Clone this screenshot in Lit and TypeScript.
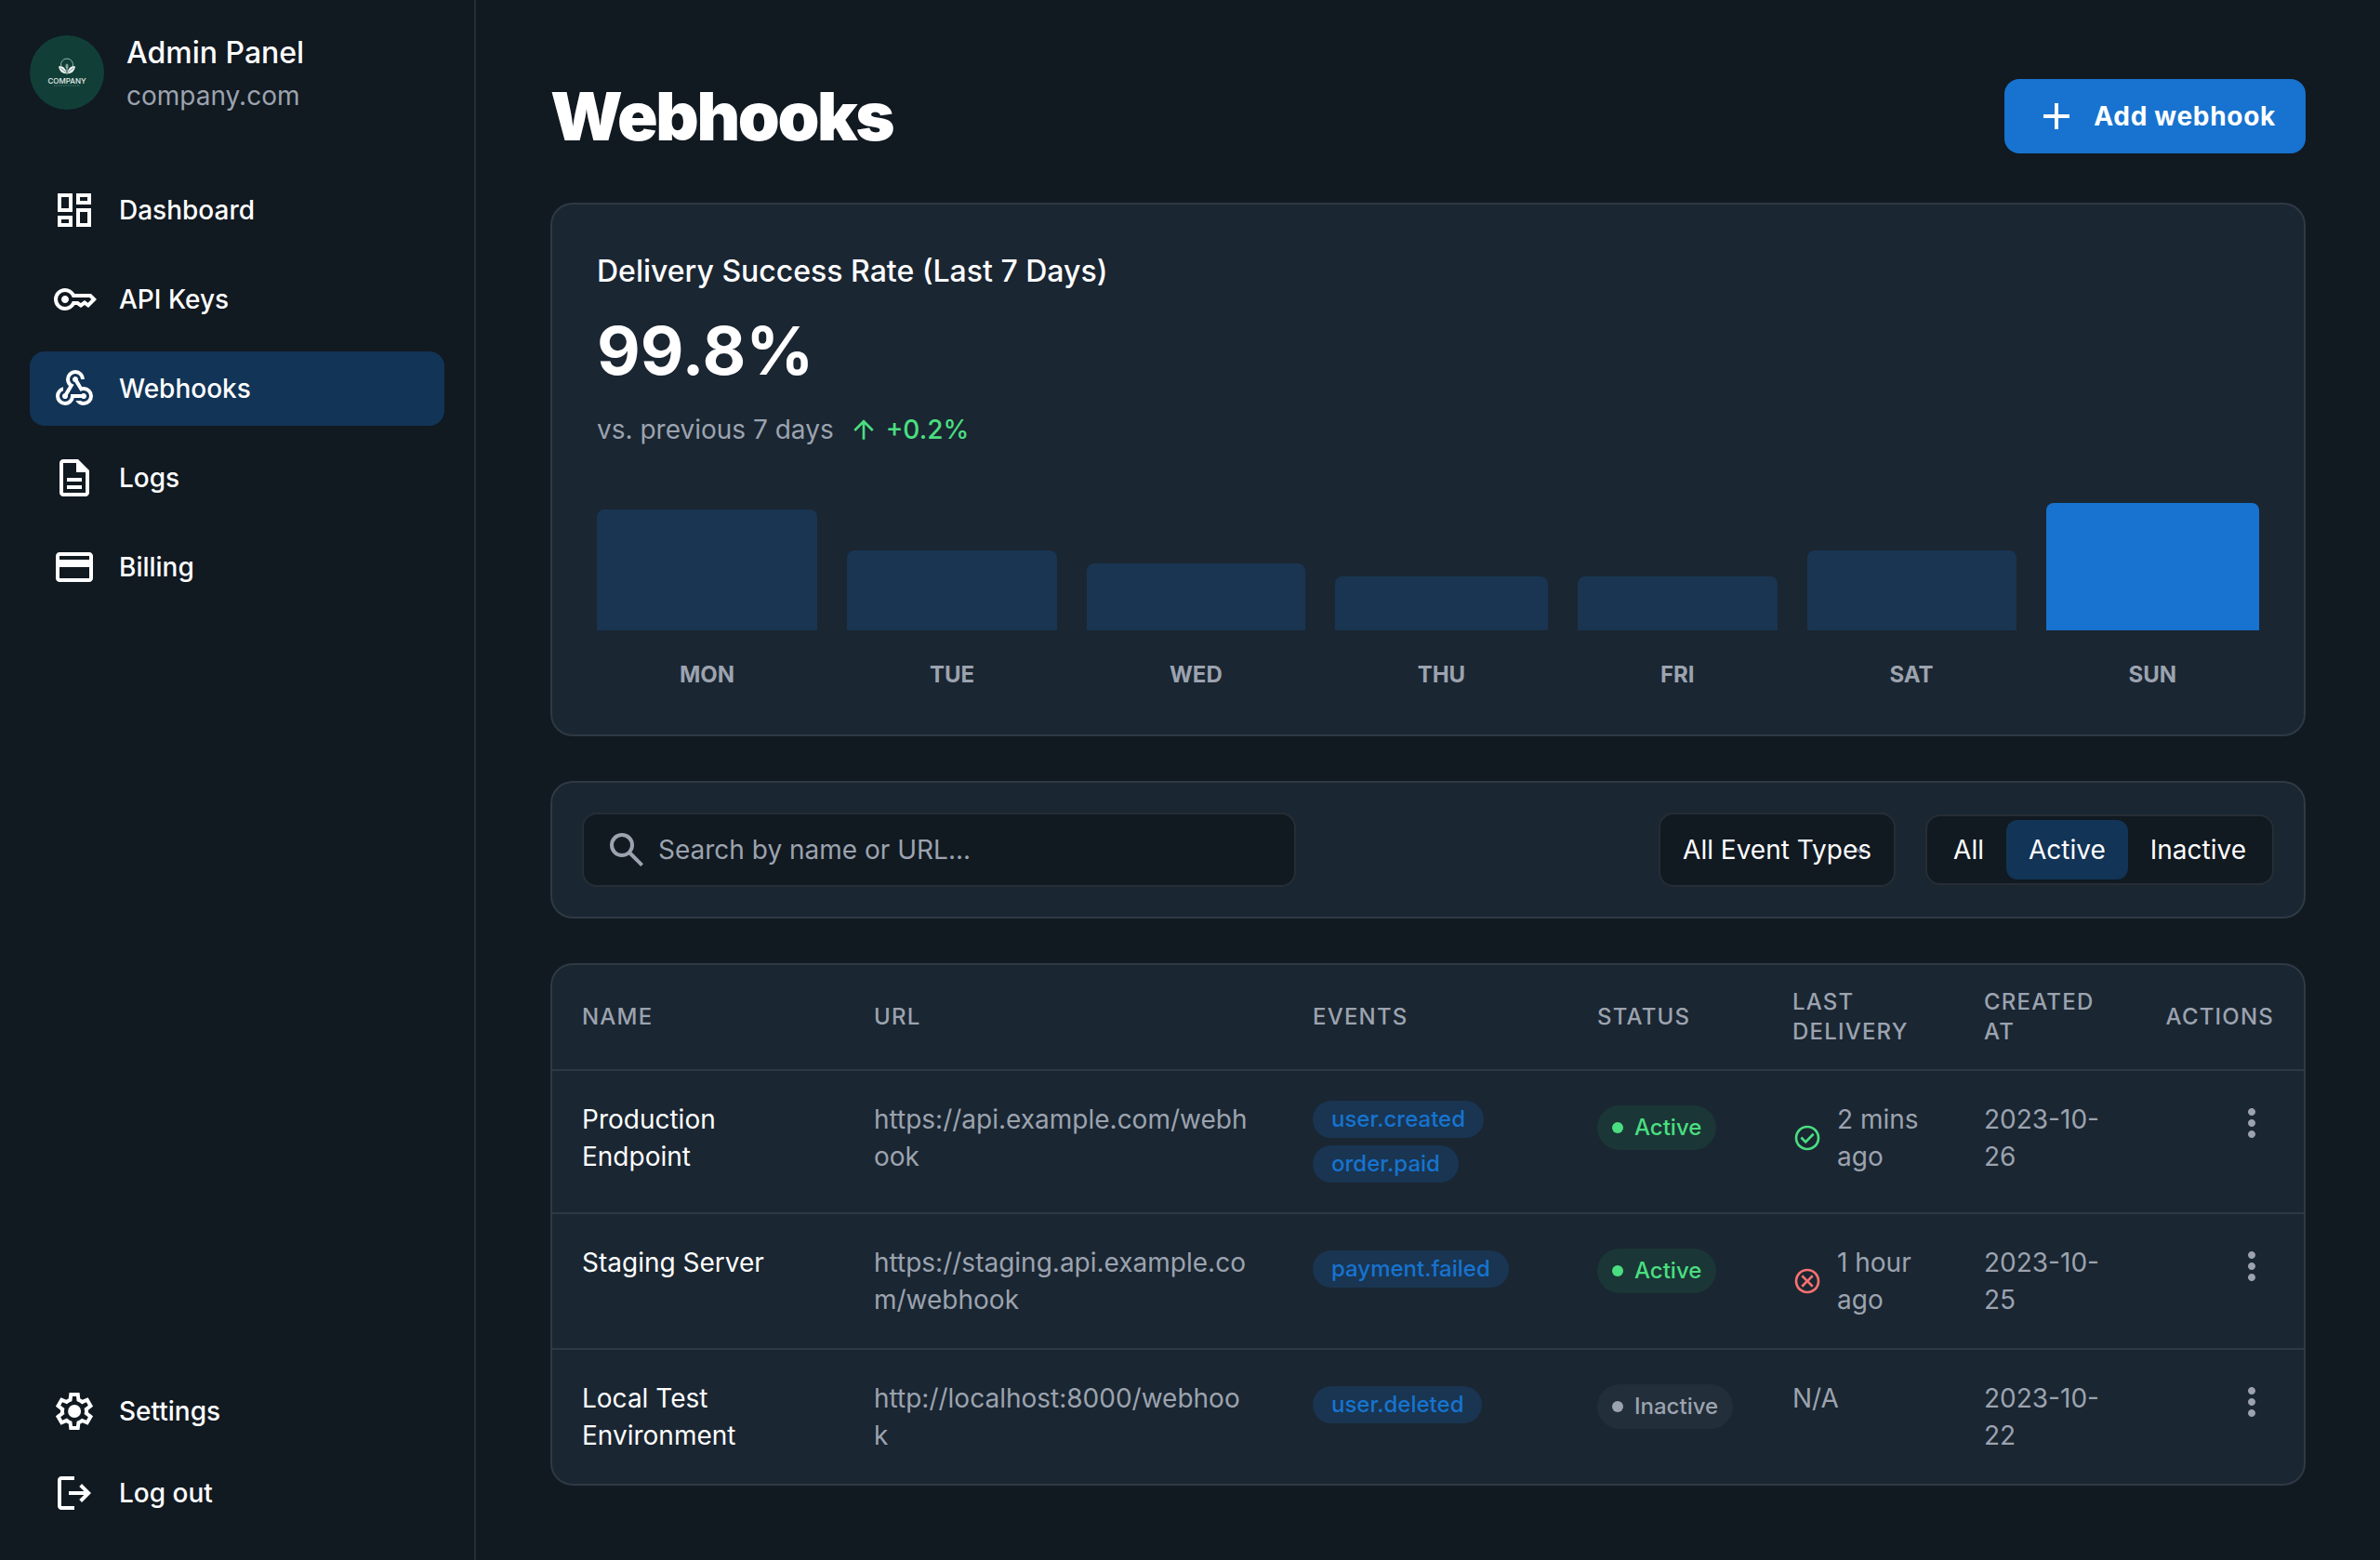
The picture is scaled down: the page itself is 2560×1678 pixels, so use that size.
import { LitElement, html, css, svg, nothing } from "lit";
import { customElement, property, state } from "lit/decorators.js";
import { classMap } from "lit/directives/class-map.js";
import { styleMap } from "lit/directives/style-map.js";

type Glyph = { box: string; d: string };

const SYMBOL = "0 -960 960 960";
const GRID = "0 0 24 24";

const GLYPHS: Record<string, Glyph> = {
  dashboard: {
    box: GRID,
    d: "M19 5v2h-4V5h4M9 5v6H5V5h4m10 8v6h-4v-6h4M9 17v2H5v-2h4M21 3h-8v6h8V3zM11 3H3v10h8V3zm10 8h-8v10h8V11zm-10 4H3v6h8v-6z",
  },
  key: {
    box: SYMBOL,
    d: "M280-400q-33 0-56.5-23.5T200-480q0-33 23.5-56.5T280-560q33 0 56.5 23.5T360-480q0 33-23.5 56.5T280-400Zm0 160q-100 0-170-70T40-480q0-100 70-170t170-70q67 0 121.5 33t86.5 87h352l120 120-180 180-80-60-80 60-85-60h-47q-32 54-86.5 87T280-240Zm0-80q56 0 98.5-34t56.5-86h125l58 41 82-61 71 55 75-75-40-40H435q-14-52-56.5-86T280-640q-66 0-113 47t-47 113q0 66 47 113t113 47Z",
  },
  webhook: {
    box: SYMBOL,
    d: "M280-120q-83 0-141.5-58.5T80-320q0-73 45.5-127.5T240-516v83q-35 12-57.5 43T160-320q0 50 35 85t85 35q50 0 85-35t35-85v-40h235q8-9 19.5-14.5T680-380q25 0 42.5 17.5T740-320q0 25-17.5 42.5T680-260q-14 0-25.5-5.5T635-280H476q-14 69-68.5 114.5T280-120Zm400 0q-56 0-101.5-27.5T507-220h111q14 10 29.5 15t32.5 5q50 0 85-35t35-85q0-50-35-85t-85-35q-20 0-37 5.5T611-418L489-621q-21-4-35-20t-14-39q0-25 17.5-42.5T500-740q25 0 42.5 17.5T560-680v8.5q0 3.5-2 8.5l87 146q8-2 17-2.5t18-.5q83 0 141.5 58.5T880-320q0 83-58.5 141.5T680-120ZM280-260q-25 0-42.5-17.5T220-320q0-22 14-38t34-21l94-156q-29-27-45.5-64.5T300-680q0-83 58.5-141.5T500-880q83 0 141.5 58.5T700-680h-80q0-50-35-85t-85-35q-50 0-85 35t-35 85q0 43 26 75.5t66 41.5L337-338q2 5 2.5 9t.5 9q0 25-17.5 42.5T280-260Z",
  },
  description: {
    box: GRID,
    d: "M8 16h8v2H8zm0-4h8v2H8zm6-10H6c-1.1 0-2 .9-2 2v16c0 1.1.89 2 1.99 2H18c1.1 0 2-.9 2-2V8l-6-6zm4 18H6V4h7v5h5v11z",
  },
  card: {
    box: GRID,
    d: "M20 4H4c-1.11 0-1.99.89-1.99 2L2 18c0 1.11.89 2 2 2h16c1.11 0 2-.89 2-2V6c0-1.11-.89-2-2-2zm0 14H4v-6h16v6zm0-10H4V6h16v2z",
  },
  settings: {
    box: SYMBOL,
    d: "m370-80-16-128q-13-5-24.5-12T307-235l-119 50L78-375l103-78q-1-7-1-13.5v-27q0-6.5 1-13.5L78-585l110-190 119 50q11-8 23-15t24-12l16-128h220l16 128q13 5 24.5 12t22.5 15l119-50 110 190-103 78q1 7 1 13.5v27q0 6.5-2 13.5l103 78-110 190-118-50q-11 8-23 15t-24 12L590-80H370Zm70-80h79l14-106q31-8 57.5-23.5T639-327l99 41 39-68-86-65q5-14 7-29.5t2-31.5q0-16-2-31.5t-7-29.5l86-65-39-68-99 42q-22-23-48.5-38.5T533-694l-13-106h-79l-14 106q-31 8-57.5 23.5T321-633l-99-41-39 68 86 64q-5 15-7 30t-2 32q0 16 2 31t7 30l-86 65 39 68 99-42q22 23 48.5 38.5T427-266l13 106Zm42-180q58 0 99-41t41-99q0-58-41-99t-99-41q-59 0-99.5 41T342-480q0 58 40.5 99t99.5 41Z",
  },
  logout: {
    box: SYMBOL,
    d: "M200-120q-33 0-56.5-23.5T120-200v-560q0-33 23.5-56.5T200-840h280v80H200v560h280v80H200Zm440-160-55-58 102-102H360v-80h327L585-622l55-58 200 200-200 200Z",
  },
  add: { box: GRID, d: "M19 13h-6v6h-2v-6H5v-2h6V5h2v6h6v2z" },
  up: {
    box: SYMBOL,
    d: "M440-160v-487L216-423l-56-57 320-320 320 320-56 57-224-224v487h-80Z",
  },
  search: {
    box: SYMBOL,
    d: "M784-120 532-372q-30 24-69 38t-83 14q-109 0-184.5-75.5T120-580q0-109 75.5-184.5T380-840q109 0 184.5 75.5T640-580q0 44-14 83t-38 69l252 252-56 56ZM380-400q75 0 127.5-52.5T560-580q0-75-52.5-127.5T380-760q-75 0-127.5 52.5T200-580q0 75 52.5 127.5T380-400Z",
  },
  success: {
    box: SYMBOL,
    d: "m424-296 282-282-56-56-226 226-114-114-56 56 170 170Zm56 216q-83 0-156-31.5T197-197q-54-54-85.5-127T80-480q0-83 31.5-156T197-763q54-54 127-85.5T480-880q83 0 156 31.5T763-763q54 54 85.5 127T880-480q0 83-31.5 156T763-197q-54 54-127 85.5T480-80Zm0-80q134 0 227-93t93-227q0-134-93-227t-227-93q-134 0-227 93t-93 227q0 134 93 227t227 93Z",
  },
  failure: {
    box: SYMBOL,
    d: "m336-280 144-144 144 144 56-56-144-144 144-144-56-56-144 144-144-144-56 56 144 144-144 144 56 56ZM480-80q-83 0-156-31.5T197-197q-54-54-85.5-127T80-480q0-83 31.5-156T197-763q54-54 127-85.5T480-880q83 0 156 31.5T763-763q54 54 85.5 127T880-480q0 83-31.5 156T763-197q-54 54-127 85.5T480-80Zm0-80q134 0 227-93t93-227q0-134-93-227t-227-93q-134 0-227 93t-93 227q0 134 93 227t227 93Z",
  },
  more: {
    box: SYMBOL,
    d: "M480-160q-33 0-56.5-23.5T400-240q0-33 23.5-56.5T480-320q33 0 56.5 23.5T560-240q0 33-23.5 56.5T480-160Zm0-240q-33 0-56.5-23.5T400-480q0-33 23.5-56.5T480-560q33 0 56.5 23.5T560-480q0 33-23.5 56.5T480-400Zm0-240q-33 0-56.5-23.5T400-720q0-33 23.5-56.5T480-800q33 0 56.5 23.5T560-720q0 33-23.5 56.5T480-640Z",
  },
};

@customElement("ui-icon")
class UiIcon extends LitElement {
  @property() name = "";

  static styles = css`
    :host {
      display: block;
      flex: none;
      width: 48px;
      height: 48px;
    }
    .glyph {
      display: block;
      width: 100%;
      height: 100%;
      fill: currentColor;
    }
  `;

  render() {
    const glyph = GLYPHS[this.name];
    if (!glyph) return nothing;
    return html`<svg class="glyph" viewBox=${glyph.box} aria-hidden="true">
      ${svg`<path d=${glyph.d}></path>`}
    </svg>`;
  }
}

@customElement("side-bar")
class SideBar extends LitElement {
  static styles = css`
    :host {
      display: flex;
      flex-direction: column;
      justify-content: space-between;
      box-sizing: border-box;
      flex: none;
      width: 512px;
      padding: 32px;
      border-right: 2px solid var(--line);
      background: var(--page);
    }
    .brand {
      display: flex;
      align-items: center;
      gap: 24px;
      margin-bottom: 62px;
    }
    .logo {
      display: block;
      width: 80px;
      height: 80px;
      border-radius: 50%;
      background: #113f38;
    }
    .word {
      font: 500 8px Inter, "Liberation Sans", sans-serif;
      fill: #e6efec;
    }
    .title {
      margin: 0;
      font-size: 32px;
      font-weight: 500;
      line-height: 50px;
    }
    .site {
      margin: 0;
      font-size: 28px;
      line-height: 42px;
      color: var(--muted);
    }
    .nav {
      display: flex;
      flex-direction: column;
      gap: 16px;
    }
    .foot {
      gap: 8px;
    }
    .item {
      display: flex;
      align-items: center;
      gap: 24px;
      padding: 16px 24px;
      border-radius: 16px;
      font-size: 28px;
      font-weight: 500;
      line-height: 42px;
      color: inherit;
      text-decoration: none;
    }
    .current {
      background: var(--primary-30);
    }
  `;

  private item(icon: string, label: string, current = false) {
    return html`<a
      class=${classMap({ item: true, current })}
      href="#"
      aria-current=${current ? "page" : nothing}
    >
      <ui-icon name=${icon}></ui-icon>${label}
    </a>`;
  }

  render() {
    return html`
      <div>
        <div class="brand">
          <svg class="logo" viewBox="0 0 80 80" role="img" aria-label="Company logo">
            <path
              d="M33.8 33.5a6.5 6.5 0 1 1 12.4 0"
              fill="none"
              stroke="#b9cfc9"
              stroke-width="0.8"
            />
            <path d="M31 33.5c4-1 8 1.500 8.500 7.500-4 .5-7.500-2-8.500-7.500z" fill="#f2f7f5" />
            <path d="M49 33.5c-4-1-8 1.500-8.500 7.500 4 .5 7.500-2 8.500-7.500z" fill="#f2f7f5" />
            <path
              d="M33 35l6 5M47 35l-6 5"
              fill="none"
              stroke="#113f38"
              stroke-width="0.6"
            />
            <ellipse cx="40" cy="33" rx="1.6" ry="2.6" fill="#7d9f96" />
            <path d="M40 34v8" stroke="#b9cfc9" stroke-width="1" />
            <text class="word" x="40" y="52" text-anchor="middle">COMPANY</text>
            <path d="M26 54h28" stroke="#5f857c" stroke-width="0.8" stroke-dasharray="1.5 1" />
          </svg>
          <div>
            <p class="title">Admin Panel</p>
            <p class="site">company.com</p>
          </div>
        </div>
        <nav class="nav" aria-label="Main">
          ${this.item("dashboard", "Dashboard")} ${this.item("key", "API Keys")}
          ${this.item("webhook", "Webhooks", true)} ${this.item("description", "Logs")}
          ${this.item("card", "Billing")}
        </nav>
      </div>
      <nav class="nav foot" aria-label="Account">
        ${this.item("settings", "Settings")} ${this.item("logout", "Log out")}
      </nav>
    `;
  }
}

const DAYS = [
  { day: "Mon", level: 90 },
  { day: "Tue", level: 60 },
  { day: "Wed", level: 50 },
  { day: "Thu", level: 40 },
  { day: "Fri", level: 40 },
  { day: "Sat", level: 60 },
  { day: "Sun", level: 95 },
];

@customElement("success-chart")
class SuccessChart extends LitElement {
  static styles = css`
    :host {
      display: flex;
      flex-direction: column;
      gap: 16px;
      padding: 48px;
      border: 2px solid var(--line);
      border-radius: 24px;
      background: var(--card);
    }
    .label {
      margin: 0;
      font-size: 32px;
      font-weight: 500;
      line-height: 48px;
    }
    .figure {
      margin: 0;
      font-size: 72px;
      font-weight: 700;
      line-height: 90px;
    }
    .compare {
      display: flex;
      align-items: center;
      gap: 16px;
      font-size: 28px;
      line-height: 48px;
      color: var(--muted);
    }
    .change {
      display: flex;
      align-items: center;
      gap: 8px;
      font-weight: 500;
      color: var(--green);
    }
    .arrow {
      width: 32px;
      height: 32px;
    }
    .chart {
      display: grid;
      grid-template-columns: repeat(7, auto);
      column-gap: 32px;
      margin-top: 32px;
    }
    .column {
      display: grid;
      grid-template-rows: 144px 32px;
      row-gap: 32px;
      align-items: end;
    }
    .bar {
      border-radius: 8px 8px 0 0;
      background: var(--primary-20);
    }
    .today {
      background: var(--primary);
    }
    .day {
      font-size: 24px;
      font-weight: 700;
      line-height: 32px;
      text-align: center;
      text-transform: uppercase;
      color: var(--muted);
    }
  `;

  render() {
    return html`
      <p class="label">Delivery Success Rate (Last 7 Days)</p>
      <p class="figure">99.8%</p>
      <div class="compare">
        <span>vs. previous 7 days</span>
        <span class="change"><ui-icon class="arrow" name="up"></ui-icon>+0.2%</span>
      </div>
      <div class="chart">
        ${DAYS.map(
          ({ day, level }, i) => html`<div class="column">
            <div
              class=${classMap({ bar: true, today: i === DAYS.length - 1 })}
              style=${styleMap({ height: `${level}%` })}
            ></div>
            <span class="day">${day}</span>
          </div>`,
        )}
      </div>
    `;
  }
}

@customElement("filter-bar")
class FilterBar extends LitElement {
  @state() private status = "Active";

  static styles = css`
    :host {
      display: flex;
      align-items: center;
      justify-content: space-between;
      gap: 32px;
      padding: 32px;
      border: 2px solid var(--line);
      border-radius: 24px;
      background: var(--card);
    }
    .field {
      display: flex;
      align-items: center;
      gap: 10px;
      box-sizing: border-box;
      flex: 1;
      max-width: 768px;
      height: 80px;
      padding: 0 22px;
      border: 2px solid var(--line);
      border-radius: 16px;
      background: var(--page);
      color: var(--muted);
    }
    .input {
      flex: 1;
      min-width: 0;
      padding: 0;
      border: 0;
      outline: 0;
      background: none;
      font: inherit;
      font-size: 28px;
      line-height: 42px;
      color: #fff;
    }
    .input::placeholder {
      color: var(--muted);
      opacity: 1;
    }
    .controls {
      display: flex;
      align-items: center;
      gap: 32px;
    }
    .types {
      appearance: none;
      height: 80px;
      padding: 0 24px;
      border: 2px solid var(--line);
      border-radius: 16px;
      background: var(--page)
        url("data:image/svg+xml,%3Csvg xmlns='http://www.w3.org/2000/svg' viewBox='0 0 16 16'%3E%3Cpath d='M3 6l5 5 5-5' fill='none' stroke='%236b7280' stroke-width='2'/%3E%3C/svg%3E")
        no-repeat right 28px center / 16px 16px;
      font: inherit;
      font-size: 28px;
      color: #fff;
    }
    .segments {
      display: flex;
      padding: 4px;
      border: 2px solid var(--line);
      border-radius: 16px;
      background: var(--page);
    }
    .segment {
      padding: 12px 24px;
      border: 0;
      border-radius: 12px;
      background: none;
      font: inherit;
      font-size: 28px;
      line-height: 40px;
      color: #fff;
    }
    .chosen {
      background: var(--primary-30);
    }
  `;

  render() {
    return html`
      <label class="field">
        <ui-icon name="search"></ui-icon>
        <input
          class="input"
          type="search"
          placeholder="Search by name or URL..."
          aria-label="Search by name or URL"
        />
      </label>
      <div class="controls">
        <select class="types" aria-label="Event type">
          <option>All Event Types</option>
        </select>
        <div class="segments" role="group" aria-label="Status">
          ${["All", "Active", "Inactive"].map(
            (name) => html`<button
              type="button"
              class=${classMap({ segment: true, chosen: name === this.status })}
              aria-pressed=${name === this.status}
              @click=${() => (this.status = name)}
            >
              ${name}
            </button>`,
          )}
        </div>
      </div>
    `;
  }
}

type Hook = {
  name: string;
  url: string;
  events: string[];
  active: boolean;
  result?: "success" | "failure";
  delivered: string;
  created: string;
};

const HOOKS: Hook[] = [
  {
    name: "Production Endpoint",
    url: "https://api.example.com/webhook",
    events: ["user.created", "order.paid"],
    active: true,
    result: "success",
    delivered: "2 mins ago",
    created: "2023-10-26",
  },
  {
    name: "Staging Server",
    url: "https://staging.api.example.com/webhook",
    events: ["payment.failed"],
    active: true,
    result: "failure",
    delivered: "1 hour ago",
    created: "2023-10-25",
  },
  {
    name: "Local Test Environment",
    url: "http://localhost:8000/webhook",
    events: ["user.deleted"],
    active: false,
    delivered: "N/A",
    created: "2023-10-22",
  },
];

@customElement("hook-table")
class HookTable extends LitElement {
  static styles = css`
    :host {
      display: block;
      overflow: hidden;
      border: 2px solid var(--line);
      border-radius: 24px;
      background: var(--card);
    }
    .table {
      width: 100%;
      table-layout: fixed;
      border-collapse: separate;
      border-spacing: 0;
      text-align: left;
    }
    .c-name {
      width: 314px;
    }
    .c-url {
      width: 472px;
    }
    .c-events {
      width: 306px;
    }
    .c-status {
      width: 210px;
    }
    .c-last {
      width: 206px;
    }
    .c-created {
      width: 194px;
    }
    .c-actions {
      width: 182px;
    }
    .head {
      padding: 24px 32px;
      border-bottom: 2px solid var(--line);
      font-size: 24px;
      font-weight: 500;
      line-height: 32px;
      letter-spacing: 0.05em;
      text-transform: uppercase;
      color: var(--muted);
    }
    .cell {
      padding: 32px;
      border-bottom: 2px solid var(--line);
      vertical-align: top;
      font-size: 28px;
      line-height: 40px;
      color: var(--muted);
    }
    .row:last-child .cell {
      border-bottom: 0;
    }
    .end {
      text-align: right;
    }
    .name {
      color: #fff;
    }
    .url {
      word-break: break-all;
    }
    .tags {
      font-size: 32px;
      line-height: 48px;
    }
    .several {
      display: flex;
      flex-direction: column;
      align-items: flex-start;
      gap: 8px;
    }
    .event {
      display: inline-flex;
      padding: 4px 20px;
      border-radius: 20px;
      background: var(--primary-20);
      font-size: 24px;
      font-weight: 500;
      line-height: 32px;
      color: var(--primary);
    }
    .status {
      display: inline-flex;
      align-items: center;
      gap: 12px;
      padding: 8px 16px;
      border-radius: 24px;
      background: rgb(107 114 128 / 10%);
      font-size: 24px;
      font-weight: 500;
      line-height: 32px;
    }
    .status::before {
      content: "";
      width: 12px;
      height: 12px;
      border-radius: 50%;
      background: currentColor;
    }
    .on {
      background: rgb(34 197 94 / 10%);
      color: var(--green);
    }
    .last {
      display: flex;
      align-items: center;
      gap: 16px;
    }
    .mark {
      width: 32px;
      height: 32px;
    }
    .success {
      color: var(--green);
    }
    .failure {
      color: var(--red);
    }
    .menu {
      display: inline-block;
      padding: 0;
      border: 0;
      background: none;
      vertical-align: top;
      color: inherit;
    }
  `;

  private row(hook: Hook) {
    const several = hook.events.length > 1;
    return html`<tr class="row">
      <td class="cell name">${hook.name}</td>
      <td class="cell url">${hook.url}</td>
      <td class="cell tags">
        <div class=${classMap({ several })}>
          ${hook.events.map((event) => html`<span class="event">${event}</span>`)}
        </div>
      </td>
      <td class="cell tags">
        <span class=${classMap({ status: true, on: hook.active })}
          >${hook.active ? "Active" : "Inactive"}</span
        >
      </td>
      <td class="cell">
        <div class="last">
          ${hook.result
            ? html`<ui-icon class="mark ${hook.result}" name=${hook.result}></ui-icon>`
            : nothing}
          <span>${hook.delivered}</span>
        </div>
      </td>
      <td class="cell">${hook.created}</td>
      <td class="cell end">
        <button class="menu" type="button" aria-label="Actions for ${hook.name}">
          <ui-icon name="more"></ui-icon>
        </button>
      </td>
    </tr>`;
  }

  render() {
    return html`<table class="table">
      <colgroup>
        <col class="c-name" />
        <col class="c-url" />
        <col class="c-events" />
        <col class="c-status" />
        <col class="c-last" />
        <col class="c-created" />
        <col class="c-actions" />
      </colgroup>
      <thead>
        <tr>
          ${["Name", "URL", "Events", "Status", "Last Delivery", "Created At"].map(
            (title) => html`<th class="head" scope="col">${title}</th>`,
          )}
          <th class="head end" scope="col">Actions</th>
        </tr>
      </thead>
      <tbody>
        ${HOOKS.map((hook) => this.row(hook))}
      </tbody>
    </table>`;
  }
}

@customElement("app-root")
class AppRoot extends LitElement {
  static styles = css`
    :host {
      --page: #111921;
      --card: #1a2632;
      --line: rgb(255 255 255 / 9%);
      --muted: #9ca3af;
      --primary: #1773cf;
      --primary-30: rgb(23 115 207 / 30%);
      --primary-20: rgb(23 115 207 / 20%);
      --green: #4ade80;
      --red: #f87171;
      display: flex;
      min-height: 100vh;
      background: var(--page);
      font-family: Inter, "Liberation Sans", sans-serif;
      color: #fff;
    }
    .main {
      display: flex;
      flex-direction: column;
      gap: 48px;
      flex: 1;
      min-width: 0;
      padding: 80px;
    }
    .top {
      display: flex;
      align-items: center;
      justify-content: space-between;
    }
    .heading {
      margin: 0;
      font-size: 72px;
      font-weight: 900;
      line-height: 90px;
      letter-spacing: -0.033em;
    }
    .add {
      display: flex;
      align-items: center;
      gap: 16px;
      height: 80px;
      padding: 0 32px;
      border: 0;
      border-radius: 16px;
      background: var(--primary);
      font: inherit;
      font-size: 28px;
      font-weight: 700;
      letter-spacing: 0.025em;
      color: #fff;
    }
  `;

  render() {
    return html`
      <side-bar></side-bar>
      <main class="main">
        <header class="top">
          <h1 class="heading">Webhooks</h1>
          <button class="add" type="button">
            <ui-icon name="add"></ui-icon>Add webhook
          </button>
        </header>
        <success-chart></success-chart>
        <filter-bar></filter-bar>
        <hook-table></hook-table>
      </main>
    `;
  }
}
